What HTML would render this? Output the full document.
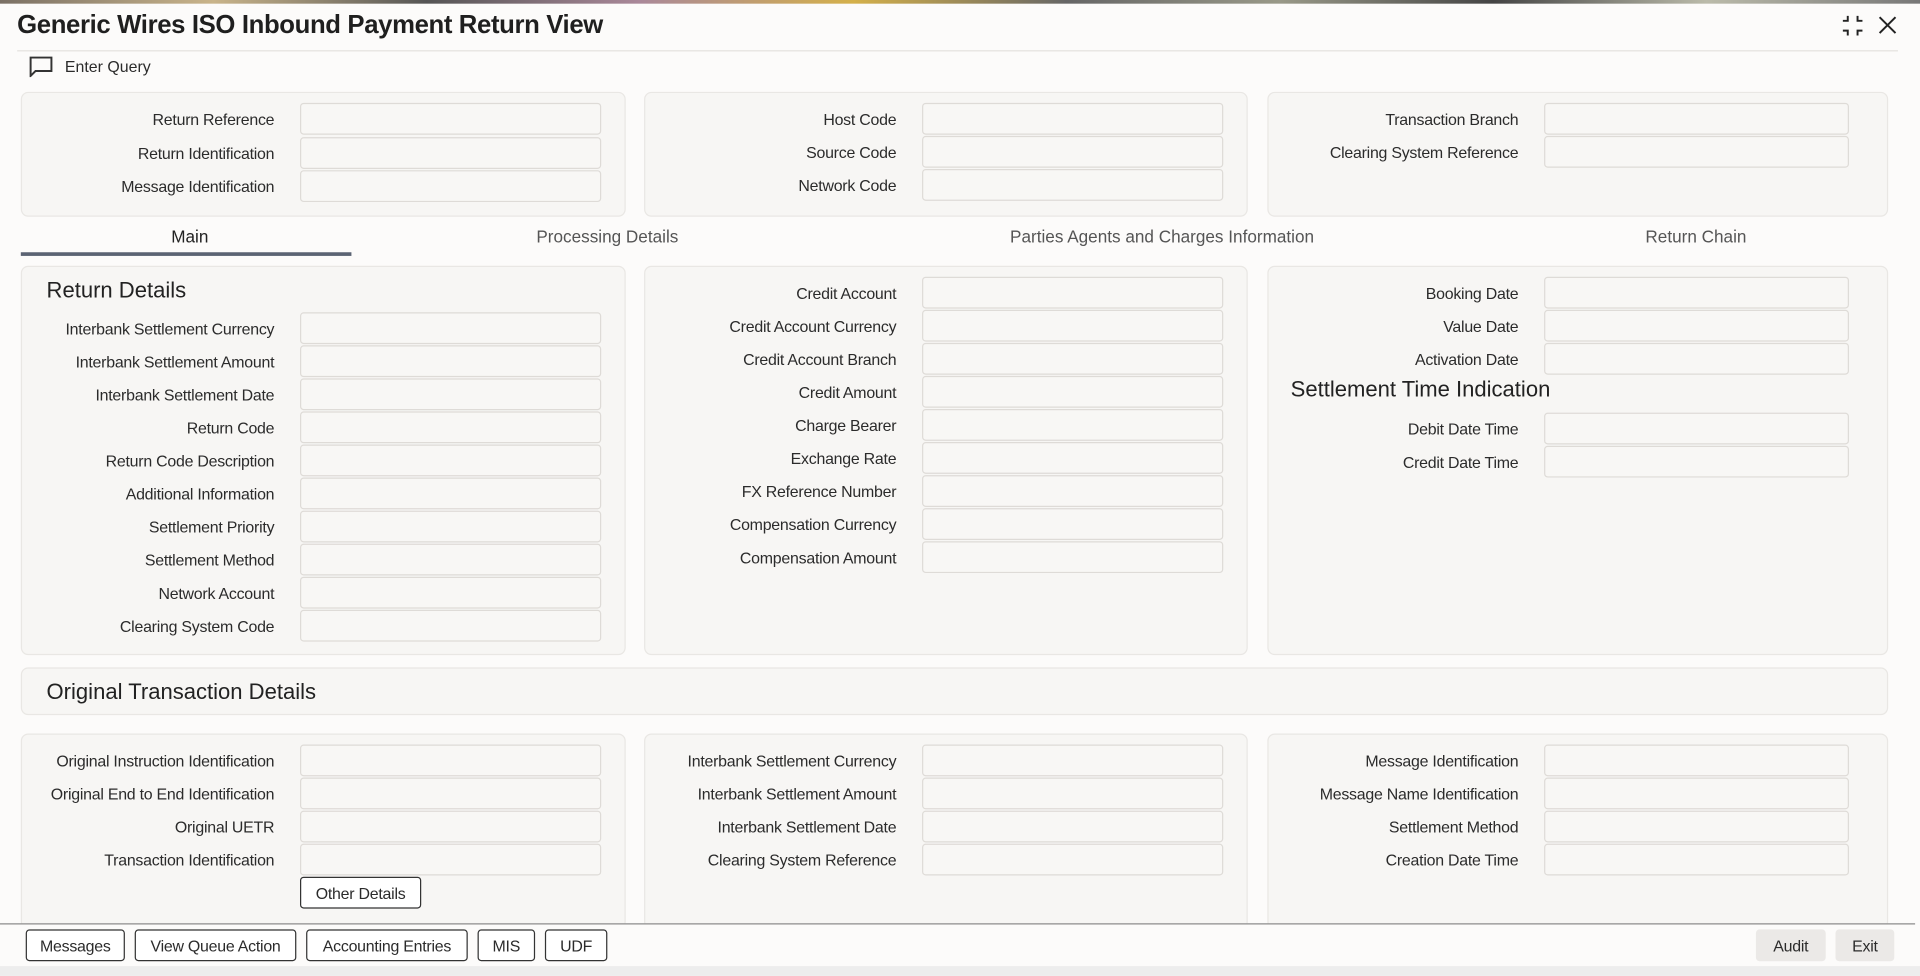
<!DOCTYPE html>
<html><head><meta charset="utf-8"><style>
html,body{margin:0;padding:0;width:1920px;height:976px;overflow:hidden;background:#fcfbfa}
#w{position:absolute;left:0;top:0;width:1568px;height:797px;transform:scale(1.22449);transform-origin:0 0;font-family:"Liberation Sans",sans-serif;color:#2b2b2b}
.a{position:absolute}
.p{position:absolute;background:#f7f6f4;border:1px solid #e9e7e4;border-radius:6px;box-sizing:border-box}
.l{position:absolute;font-size:13px;text-align:right;white-space:nowrap;line-height:16px;letter-spacing:-0.2px;margin-top:1px}
.i{position:absolute;height:26px;background:#f8f7f5;border:1px solid #dedbd7;border-radius:3px;box-sizing:border-box}
.h{position:absolute;font-size:18px;white-space:nowrap;color:#222;margin-top:1px}
.t{position:absolute;top:185px;font-size:14px;color:#555;white-space:nowrap;transform:translateX(-50%)}
.b{position:absolute;top:759px;height:26px;border:1px solid #333;border-radius:3px;background:#fff;font-size:13px;line-height:25px;text-align:center;box-sizing:border-box;letter-spacing:-0.2px}
</style></head><body><div id="w">
<div class="a" style="left:0;top:0;width:1568px;height:3px;background:linear-gradient(90deg,#7a7065,#c9b48a,#555,#a89,#d4b04a,#666,#998,#444,#bba,#777)"></div>
<div class="a" style="left:14px;top:9px;font-size:21px;font-weight:bold;color:#1f1f1f;white-space:nowrap;letter-spacing:-0.3px">Generic Wires ISO Inbound Payment Return View</div>
<svg class="a" style="left:1504px;top:12px" width="18" height="18" viewBox="0 0 18 18" fill="none" stroke="#222" stroke-width="1.6"><path d="M5 1v4H1M13 1v4h4M5 17v-4H1M13 17v-4h4"/></svg>
<svg class="a" style="left:1534px;top:13px" width="15" height="15" viewBox="0 0 15 15" stroke="#222" stroke-width="1.6"><path d="M1 1l13 13M14 1L1 14"/></svg>
<div class="a" style="left:14px;top:41px;width:1536px;height:1px;background:#e4e2df"></div>
<svg class="a" style="left:24px;top:46px" width="20" height="17" viewBox="0 0 20 17" fill="none" stroke="#333" stroke-width="1.6"><path d="M1 1h17v11H5l-4 4z"/></svg>
<div class="a" style="left:53px;top:47px;font-size:13px">Enter Query</div>

<div class="p" style="left:17px;top:75px;width:494px;height:102px"></div>
<div class="p" style="left:526px;top:75px;width:493px;height:102px"></div>
<div class="p" style="left:1035px;top:75px;width:507px;height:102px"></div>
<div class="l" style="right:1344px;top:89px">Return Reference</div><div class="i" style="left:245px;top:84px;width:246px"></div>
<div class="l" style="right:1344px;top:117px">Return Identification</div><div class="i" style="left:245px;top:112px;width:246px"></div>
<div class="l" style="right:1344px;top:144px">Message Identification</div><div class="i" style="left:245px;top:139px;width:246px"></div>
<div class="l" style="right:836px;top:89px">Host Code</div><div class="i" style="left:753px;top:84px;width:246px"></div>
<div class="l" style="right:836px;top:116px">Source Code</div><div class="i" style="left:753px;top:111px;width:246px"></div>
<div class="l" style="right:836px;top:143px">Network Code</div><div class="i" style="left:753px;top:138px;width:246px"></div>
<div class="l" style="right:328px;top:89px">Transaction Branch</div><div class="i" style="left:1261px;top:84px;width:249px"></div>
<div class="l" style="right:328px;top:116px">Clearing System Reference</div><div class="i" style="left:1261px;top:111px;width:249px"></div>

<div class="t" style="left:155px;color:#222">Main</div>
<div class="a" style="left:17px;top:206px;width:270px;height:3px;background:#5b6373"></div>
<div class="t" style="left:496px">Processing Details</div>
<div class="t" style="left:949px">Parties Agents and Charges Information</div>
<div class="t" style="left:1385px">Return Chain</div>

<div class="p" style="left:17px;top:217px;width:494px;height:318px"></div>
<div class="p" style="left:526px;top:217px;width:493px;height:318px"></div>
<div class="p" style="left:1035px;top:217px;width:507px;height:318px"></div>
<div class="h" style="left:38px;top:226px">Return Details</div>
<div class="l" style="right:1344px;top:260px">Interbank Settlement Currency</div><div class="i" style="left:245px;top:255px;width:246px"></div>
<div class="l" style="right:1344px;top:287px">Interbank Settlement Amount</div><div class="i" style="left:245px;top:282px;width:246px"></div>
<div class="l" style="right:1344px;top:314px">Interbank Settlement Date</div><div class="i" style="left:245px;top:309px;width:246px"></div>
<div class="l" style="right:1344px;top:341px">Return Code</div><div class="i" style="left:245px;top:336px;width:246px"></div>
<div class="l" style="right:1344px;top:368px">Return Code Description</div><div class="i" style="left:245px;top:363px;width:246px"></div>
<div class="l" style="right:1344px;top:395px">Additional Information</div><div class="i" style="left:245px;top:390px;width:246px"></div>
<div class="l" style="right:1344px;top:422px">Settlement Priority</div><div class="i" style="left:245px;top:417px;width:246px"></div>
<div class="l" style="right:1344px;top:449px">Settlement Method</div><div class="i" style="left:245px;top:444px;width:246px"></div>
<div class="l" style="right:1344px;top:476px">Network Account</div><div class="i" style="left:245px;top:471px;width:246px"></div>
<div class="l" style="right:1344px;top:503px">Clearing System Code</div><div class="i" style="left:245px;top:498px;width:246px"></div>

<div class="l" style="right:836px;top:231px">Credit Account</div><div class="i" style="left:753px;top:226px;width:246px"></div>
<div class="l" style="right:836px;top:258px">Credit Account Currency</div><div class="i" style="left:753px;top:253px;width:246px"></div>
<div class="l" style="right:836px;top:285px">Credit Account Branch</div><div class="i" style="left:753px;top:280px;width:246px"></div>
<div class="l" style="right:836px;top:312px">Credit Amount</div><div class="i" style="left:753px;top:307px;width:246px"></div>
<div class="l" style="right:836px;top:339px">Charge Bearer</div><div class="i" style="left:753px;top:334px;width:246px"></div>
<div class="l" style="right:836px;top:366px">Exchange Rate</div><div class="i" style="left:753px;top:361px;width:246px"></div>
<div class="l" style="right:836px;top:393px">FX Reference Number</div><div class="i" style="left:753px;top:388px;width:246px"></div>
<div class="l" style="right:836px;top:420px">Compensation Currency</div><div class="i" style="left:753px;top:415px;width:246px"></div>
<div class="l" style="right:836px;top:447px">Compensation Amount</div><div class="i" style="left:753px;top:442px;width:246px"></div>

<div class="l" style="right:328px;top:231px">Booking Date</div><div class="i" style="left:1261px;top:226px;width:249px"></div>
<div class="l" style="right:328px;top:258px">Value Date</div><div class="i" style="left:1261px;top:253px;width:249px"></div>
<div class="l" style="right:328px;top:285px">Activation Date</div><div class="i" style="left:1261px;top:280px;width:249px"></div>
<div class="h" style="left:1054px;top:307px">Settlement Time Indication</div>
<div class="l" style="right:328px;top:342px">Debit Date Time</div><div class="i" style="left:1261px;top:337px;width:249px"></div>
<div class="l" style="right:328px;top:369px">Credit Date Time</div><div class="i" style="left:1261px;top:364px;width:249px"></div>

<div class="p" style="left:17px;top:545px;width:1525px;height:39px"></div>
<div class="h" style="left:38px;top:554px">Original Transaction Details</div>

<div class="p" style="left:17px;top:599px;width:494px;height:160px"></div>
<div class="p" style="left:526px;top:599px;width:493px;height:160px"></div>
<div class="p" style="left:1035px;top:599px;width:507px;height:160px"></div>
<div class="l" style="right:1344px;top:613px">Original Instruction Identification</div><div class="i" style="left:245px;top:608px;width:246px"></div>
<div class="l" style="right:1344px;top:640px">Original End to End Identification</div><div class="i" style="left:245px;top:635px;width:246px"></div>
<div class="l" style="right:1344px;top:667px">Original UETR</div><div class="i" style="left:245px;top:662px;width:246px"></div>
<div class="l" style="right:1344px;top:694px">Transaction Identification</div><div class="i" style="left:245px;top:689px;width:246px"></div>
<div class="b" style="left:245px;top:716px;width:99px">Other Details</div>
<div class="l" style="right:836px;top:613px">Interbank Settlement Currency</div><div class="i" style="left:753px;top:608px;width:246px"></div>
<div class="l" style="right:836px;top:640px">Interbank Settlement Amount</div><div class="i" style="left:753px;top:635px;width:246px"></div>
<div class="l" style="right:836px;top:667px">Interbank Settlement Date</div><div class="i" style="left:753px;top:662px;width:246px"></div>
<div class="l" style="right:836px;top:694px">Clearing System Reference</div><div class="i" style="left:753px;top:689px;width:246px"></div>
<div class="l" style="right:328px;top:613px">Message Identification</div><div class="i" style="left:1261px;top:608px;width:249px"></div>
<div class="l" style="right:328px;top:640px">Message Name Identification</div><div class="i" style="left:1261px;top:635px;width:249px"></div>
<div class="l" style="right:328px;top:667px">Settlement Method</div><div class="i" style="left:1261px;top:662px;width:249px"></div>
<div class="l" style="right:328px;top:694px">Creation Date Time</div><div class="i" style="left:1261px;top:689px;width:249px"></div>

<div class="a" style="left:0;top:754px;width:1568px;height:43px;background:#fcfbfa"></div>
<div class="a" style="left:0;top:754px;width:1564px;height:1px;background:#8a8a8a"></div>
<div class="b" style="left:21px;width:81px">Messages</div>
<div class="b" style="left:110px;width:132px">View Queue Action</div>
<div class="b" style="left:250px;width:132px">Accounting Entries</div>
<div class="b" style="left:390px;width:47px">MIS</div>
<div class="b" style="left:445px;width:51px">UDF</div>
<div class="b" style="left:1434px;width:57px;border:none;background:#ebe9e7;line-height:27px">Audit</div>
<div class="b" style="left:1499px;width:48px;border:none;background:#ebe9e7;line-height:27px">Exit</div>
<div class="a" style="left:0;top:789px;width:1568px;height:8px;background:#ededed"></div>
</div></body></html>
